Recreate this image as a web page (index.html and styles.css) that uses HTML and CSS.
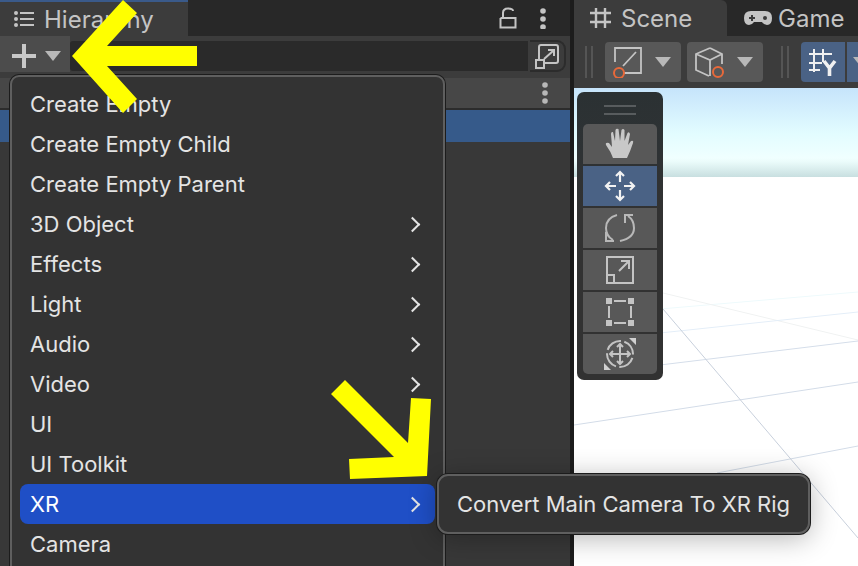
FILE: index.html
```html
<!DOCTYPE html>
<html lang="en">
<head>
    <meta charset="UTF-8">
    <title>Hierarchy create menu</title>
    <link rel="stylesheet" href="styles.css">
</head>
<body>
    <div class="editor">
        <section class="hierarchy">
            <div class="tabbar">
                <div class="tab hier-tab">
                    <svg class="tab-icon" width="22" height="18" viewBox="0 0 22 18"><g fill="#c4c4c4"><circle cx="3" cy="3" r="2"/><circle cx="3" cy="9" r="2"/><circle cx="3" cy="15" r="2"/><rect x="7" y="2" width="14" height="2"/><rect x="7" y="8" width="14" height="2"/><rect x="7" y="14" width="14" height="2"/></g></svg>
                    <span>Hierarchy</span>
                </div>
                <div class="tab-actions">
                    <svg width="18" height="22" viewBox="0 0 18 22"><path d="M1.500 11V20.500H16.500V11H1.500M4 11V6Q4 1.500 9 1.500Q14 1.500 14 4" fill="none" stroke="#c4c4c4" stroke-width="2"/></svg>
                    <svg width="8" height="22" viewBox="0 0 8 22"><g fill="#c4c4c4"><circle cx="4" cy="4" r="2.800"/><circle cx="4" cy="12" r="2.800"/><circle cx="4" cy="20" r="2.800"/></g></svg>
                </div>
            </div>
            <div class="hier-tools">
                <div class="add-btn">
                    <svg width="24" height="24" viewBox="0 0 24 24"><path d="M0 12H24M12 0V24" stroke="#c8c8c8" stroke-width="4"/></svg>
                    <i class="tri"></i>
                </div>
                <div class="search"></div>
                <div class="scope-btn">
                    <svg width="24" height="25" viewBox="0 0 24 25"><g fill="none" stroke="#c4c4c4" stroke-width="2"><path d="M4 15V3Q4 1 6 1H21Q23 1 23 3V17Q23 19 21 19H10"/><rect x="1" y="16" width="8" height="8"/><path d="M9 15L18 7M13 6H19V12"/></g></svg>
                </div>
            </div>
            <div class="col-head">
                <svg width="8" height="22" viewBox="0 0 8 22"><g fill="#b8b8b8"><circle cx="4" cy="3" r="2.800"/><circle cx="4" cy="11" r="2.800"/><circle cx="4" cy="19" r="2.800"/></g></svg>
            </div>
            <div class="sel-row"></div>
        </section>

        <section class="scene">
            <div class="tabbar">
                <div class="tab scene-tab">
                    <svg width="22" height="22" viewBox="0 0 22 22"><path d="M6 1V21M15 1V21M0 6H21M0 15H21" stroke="#c4c4c4" stroke-width="2.400" fill="none"/></svg>
                    <span>Scene</span>
                </div>
                <div class="tab game-tab">
                    <svg width="30" height="16" viewBox="0 0 30 16"><path d="M8 1H22Q29 1 29 8Q29 15 24 15Q21 15 19 12H11Q9 15 6 15Q1 15 1 8Q1 1 8 1Z" fill="#c4c4c4"/><path d="M6 8H12M9 5V11" stroke="#3a3a3a" stroke-width="2"/><circle cx="22" cy="8" r="2" fill="#3a3a3a"/></svg>
                    <span>Game</span>
                </div>
            </div>
            <div class="scene-tools">
                <i class="grip"></i>
                <div class="tool-btn">
                    <svg width="32" height="32" viewBox="0 0 32 32"><path d="M3 16V2H29V27H12M11 20L24 6" fill="none" stroke="#c4c4c4" stroke-width="1.800"/><circle cx="7" cy="27" r="5" fill="none" stroke="#e8693a" stroke-width="2"/></svg>
                    <i class="tri"></i>
                </div>
                <div class="tool-btn last-tool">
                    <svg width="32" height="32" viewBox="0 0 32 32"><path d="M16 2L28 8V18M16 2L2 8V24L15 30M2 8L16 14L28 8M16 14V30" fill="none" stroke="#c4c4c4" stroke-width="1.800"/><circle cx="24" cy="26" r="5" fill="#585858" stroke="#e8693a" stroke-width="2"/></svg>
                    <i class="tri"></i>
                </div>
                <i class="grip"></i>
                <div class="snap-btn">
                    <svg width="30" height="28" viewBox="0 0 30 28"><path d="M6 1V24M15 1V14M1 6H24M1 15H14M1 22H12" stroke="#f0f0f0" stroke-width="2" fill="none"/><path d="M16 13L21.500 20L27 13M21.500 20V28" stroke="#f0f0f0" stroke-width="3.600" fill="none"/></svg>
                </div>
                <div class="snap-more"><i class="tri"></i></div>
            </div>
            <div class="viewport">
                <div class="sky"></div>
                <svg class="grid" width="284" height="478" viewBox="0 0 284 478">
                    <g fill="none" stroke-width="1">
                        <path d="M86 221L284 204" stroke="#eefafc"/>
                        <path d="M89 205L284 252" stroke="#f0f2f2"/>
                        <path d="M86 245L284 224" stroke="#e4eef8"/>
                        <path d="M86 277L284 253" stroke="#d5deea"/>
                        <path d="M0 337L284 294" stroke="#d3dce8"/>
                        <path d="M143 385L284 358" stroke="#d3dce8"/>
                        <path d="M89 221L284 450" stroke="#c8d0dc"/>
                    </g>
                </svg>
            </div>
        </section>
    </div>

    <div class="toolbox">
        <div class="tb-grip"></div>
        <div class="tb-btn first">
            <svg width="30" height="32" viewBox="0 0 30 32"><path d="M8 30Q6 24 1 17Q0 14 4 15L7 19L6 6Q6 3.500 8 4L10 13L10.500 2Q11 0 13.500 1L15 13L16.500 2Q18 0 19.500 2L19.500 13L22.500 5Q24 3 25 6L23 17L26 13Q29 12 28 15Q25 24 22 30Z" fill="#c8c8c8"/></svg>
        </div>
        <div class="tb-btn active">
            <svg width="32" height="32" viewBox="0 0 32 32"><path d="M16 2V12M16 20V30M2 16H12M20 16H30M12 6L16 2L20 6M12 26L16 30L20 26M6 12L2 16L6 20M26 12L30 16L26 20" fill="none" stroke="#f2f2f2" stroke-width="2.200"/></svg>
        </div>
        <div class="tb-btn">
            <svg width="30" height="30" viewBox="0 0 30 30"><path d="M12 2Q1 5 1 15Q1 23 8 27M1 19V28H9M28 2H20V10M23 3Q29 7 29 15Q29 25 15 28" fill="none" stroke="#b8b8b8" stroke-width="2"/></svg>
        </div>
        <div class="tb-btn">
            <svg width="28" height="28" viewBox="0 0 28 28"><path d="M1 1H27V27H1ZM1 19H8V27M13 15L23 5M15 5H23V13" fill="none" stroke="#c4c4c4" stroke-width="2"/></svg>
        </div>
        <div class="tb-btn">
            <svg width="28" height="28" viewBox="0 0 28 28"><g fill="#c4c4c4"><rect width="6" height="6"/><rect x="22" width="6" height="6"/><rect y="22" width="6" height="6"/><rect x="22" y="22" width="6" height="6"/><rect x="8" y="2" width="12" height="2"/><rect x="8" y="24" width="12" height="2"/><rect x="2" y="8" width="2" height="12"/><rect x="24" y="8" width="2" height="12"/></g></svg>
        </div>
        <div class="tb-btn last">
            <svg width="34" height="34" viewBox="0 0 34 34"><g fill="none" stroke="#c4c4c4" stroke-width="2"><circle cx="17" cy="17" r="13" stroke-dasharray="17 3.420" stroke-dashoffset="-4"/><path d="M17 7V27M7 17H27M14 10L17 7L20 10M14 24L17 27L20 24M10 14L7 17L10 20M24 14L27 17L24 20"/></g><path d="M33 1V8L26 1ZM1 33V26L8 33Z" fill="#d0d0d0"/></svg>
        </div>
    </div>

    <div class="menu-clip">
        <div class="menu">
            <div class="menu-row">Create Empty</div>
            <div class="menu-row">Create Empty Child</div>
            <div class="menu-row">Create Empty Parent</div>
            <div class="menu-row">3D Object<i class="chev"></i></div>
            <div class="menu-row">Effects<i class="chev"></i></div>
            <div class="menu-row">Light<i class="chev"></i></div>
            <div class="menu-row">Audio<i class="chev"></i></div>
            <div class="menu-row">Video<i class="chev"></i></div>
            <div class="menu-row">UI</div>
            <div class="menu-row">UI Toolkit</div>
            <div class="menu-row hot">XR<i class="chev"></i></div>
            <div class="menu-row">Camera</div>
        </div>
    </div>

    <div class="submenu">Convert Main Camera To XR Rig</div>

    <svg class="arrows" width="858" height="566" viewBox="0 0 858 566">
        <polygon fill="#ffff00" points="72,56 123,0 137,13 107,46 197,46 197,66 107,66 137,99 123,113"/>
        <polygon fill="#ffff00" points="345,380 331,394 394,457 349,459 350,479 427,476 431,399 411,398 408,443"/>
    </svg>
</body>
</html>
```

FILE: styles.css
```css
html, body {
    margin: 0;
    height: 100%;
    overflow: hidden;
}
body {
    position: relative;
    width: 858px;
    height: 566px;
    background: #1c1c1c;
    font-family: Inter, "Noto Sans", sans-serif;
}
.editor {
    display: flex;
    height: 566px;
}
.hierarchy {
    width: 570px;
    display: flex;
    flex-direction: column;
    background: #383838;
}
.scene {
    width: 284px;
    margin-left: 4px;
    display: flex;
    flex-direction: column;
    background: #3c3c3c;
}
.tabbar {
    height: 36px;
    flex: none;
    display: flex;
    background: #282828;
}
.tab {
    display: flex;
    align-items: center;
    box-sizing: border-box;
    color: #c4c4c4;
    font-size: 24px;
}
.hier-tab {
    width: 188px;
    padding: 0 0 0 13px;
    gap: 9px;
    background: #3c3c3c;
    border-top: 2px solid #3a5a8a;
}
.tab-actions {
    margin-left: auto;
    display: flex;
    align-items: center;
    gap: 22px;
    padding-right: 23px;
}
.scene-tab {
    width: 153px;
    padding-left: 16px;
    gap: 9px;
    background: #3c3c3c;
    border-top-right-radius: 6px;
}
.game-tab {
    padding-left: 16px;
    gap: 5px;
}
.tri {
    display: block;
    width: 0;
    height: 0;
    border-left: 8px solid transparent;
    border-right: 8px solid transparent;
    border-top: 10px solid #b8b8b8;
}
.hier-tools {
    height: 42px;
    flex: none;
    display: flex;
    align-items: flex-start;
    background: #3c3c3c;
}
.add-btn {
    width: 70px;
    height: 36px;
    display: flex;
    align-items: center;
    gap: 9px;
    padding: 4px 0 0 12px;
    box-sizing: border-box;
    background: #4c4c4c;
}
.search {
    width: 458px;
    height: 30px;
    margin-top: 5px;
    background: #2a2a2a;
    border-radius: 3px 0 0 3px;
}
.scope-btn {
    width: 36px;
    height: 32px;
    margin: 4px 0 0 2px;
    display: flex;
    align-items: center;
    justify-content: center;
    border: 2px solid #2c2c2c;
    border-left: 0;
    border-radius: 0 9px 9px 0;
    box-sizing: border-box;
}
.col-head {
    height: 30px;
    flex: none;
    display: flex;
    align-items: center;
    justify-content: flex-end;
    padding-right: 21px;
    background: #474747;
    border-bottom: 2px solid #2c2c2c;
}
.sel-row {
    height: 32px;
    flex: none;
    background: #365a8a;
}
.scene-tools {
    height: 52px;
    flex: none;
    display: flex;
    align-items: center;
    padding: 0 0 0 11px;
    box-sizing: border-box;
}
.grip {
    width: 8px;
    height: 32px;
    border-left: 2px solid #555;
    border-right: 2px solid #555;
    margin-right: 12px;
    box-sizing: border-box;
}
.tool-btn {
    width: 76px;
    height: 40px;
    margin-right: 6px;
    display: flex;
    align-items: center;
    gap: 11px;
    padding-left: 7px;
    box-sizing: border-box;
    background: #585858;
    border-radius: 4px;
}
.tool-btn.last-tool {
    margin-right: 18px;
}
.snap-btn {
    width: 44px;
    height: 40px;
    margin-right: 2px;
    display: flex;
    align-items: center;
    justify-content: center;
    background: #4a6285;
    border-radius: 4px 0 0 4px;
}
.snap-more {
    width: 11px;
    height: 40px;
    padding: 15px 0 0 6px;
    box-sizing: border-box;
    background: #4a6285;
    overflow: hidden;
}
.viewport {
    flex: 1;
    position: relative;
    background: #ffffff;
    overflow: hidden;
}
.sky {
    height: 89px;
    background: linear-gradient(180deg, #c6e4fb 0, #e2fcff 45px, #f0ffff 70px, #eafbfa 74px, #c8dfe0 89px);
}
.grid {
    position: absolute;
    left: 0;
    top: 0;
}
.toolbox {
    position: absolute;
    left: 577px;
    top: 92px;
    width: 86px;
    height: 288px;
    box-sizing: border-box;
    padding: 0 6px;
    display: flex;
    flex-direction: column;
    gap: 2px;
    background: linear-gradient(180deg, #2b3133 0, #2e3234 60px, #323232 120px);
    border-radius: 7px;
}
.tb-grip {
    height: 30px;
    margin: 0 21px;
    box-sizing: border-box;
    border-bottom: 2px solid #585c5e;
    position: relative;
    top: -7px;
}
.tb-grip::before {
    content: "";
    position: absolute;
    left: 0;
    right: 0;
    bottom: 6px;
    height: 2px;
    background: #585c5e;
}
.tb-btn {
    height: 40px;
    display: flex;
    align-items: center;
    justify-content: center;
    background: #585858;
}
.tb-btn.first {
    border-radius: 5px 5px 0 0;
}
.tb-btn.last {
    border-radius: 0 0 5px 5px;
}
.tb-btn.active {
    background: #4a6285;
}
.menu-clip {
    position: absolute;
    left: 8px;
    top: 73px;
    width: 440px;
    height: 493px;
    overflow: hidden;
}
.menu {
    margin: 2px 0 0 2px;
    width: 435px;
    height: 520px;
    box-sizing: border-box;
    padding: 7px 8px 0;
    background: #333333;
    border: 2px solid #5f5f5f;
    border-radius: 9px;
    box-shadow: 0 0 0 1px #1c1c1c;
}
.menu-row {
    height: 40px;
    display: flex;
    align-items: center;
    justify-content: space-between;
    padding: 0 17px 0 10px;
    color: #e4e4e4;
    font-size: 22px;
    border-radius: 8px;
}
.menu-row.hot {
    background: #1f4fc6;
    color: #ffffff;
}
.chev {
    display: block;
    width: 9px;
    height: 9px;
    border-top: 2.500px solid #e4e4e4;
    border-right: 2.500px solid #e4e4e4;
    transform: rotate(45deg);
}
.submenu {
    position: absolute;
    left: 437px;
    top: 474px;
    width: 373px;
    height: 60px;
    box-sizing: border-box;
    padding-left: 18px;
    display: flex;
    align-items: center;
    background: #333333;
    border: 2px solid #5f5f5f;
    border-radius: 11px;
    box-shadow: 0 0 0 1px #1c1c1c, 0 4px 28px rgba(0, 0, 0, 0.3);
    color: #e4e4e4;
    font-size: 22px;
    white-space: nowrap;
}
.arrows {
    position: absolute;
    left: 0;
    top: 0;
}
```
